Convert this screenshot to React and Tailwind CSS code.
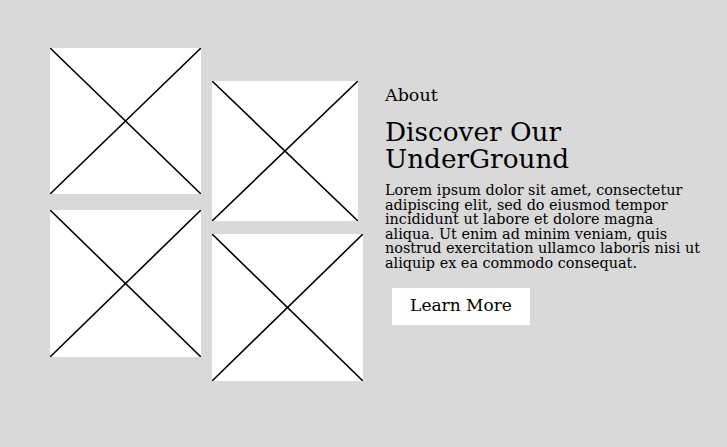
import React from "react";

function Placeholder({ className }) {
  return (
    <div className={"bg-white " + className}>
      <svg className="block w-full h-full" viewBox="0 0 100 100" preserveAspectRatio="none">
        <line x1="0" y1="0" x2="100" y2="100" stroke="#000" strokeWidth="1.6" vectorEffect="non-scaling-stroke" />
        <line x1="100" y1="0" x2="0" y2="100" stroke="#000" strokeWidth="1.6" vectorEffect="non-scaling-stroke" />
      </svg>
    </div>
  );
}

export default function App() {
  return (
    <div
      className="w-[727px] h-[447px] bg-[#d9d9d9] flex text-black overflow-hidden"
      style={{ fontFamily: '"DejaVu Serif", serif' }}
    >
      <div className="flex pl-[50px]">
        <div className="flex flex-col gap-[16px] pt-[48px]">
          <Placeholder className="w-[151px] h-[146px]" />
          <Placeholder className="w-[151px] h-[147px]" />
        </div>
        <div className="flex flex-col gap-[13px] pt-[81px] ml-[11px]">
          <Placeholder className="w-[146px] h-[140px]" />
          <Placeholder className="w-[151px] h-[147px]" />
        </div>
      </div>
      <div className="ml-[22px] pt-[84px] w-[322px] flex flex-col">
        <div className="text-[17.5px] leading-[22px]">About</div>
        <h1 className="mt-[13px] text-[26.3px] leading-[26.5px] font-normal">Discover Our UnderGround</h1>
        <p className="mt-[11px] text-[14.4px] leading-[14.6px]">
          Lorem ipsum dolor sit amet, consectetur adipiscing elit, sed do eiusmod tempor incididunt ut labore et dolore magna aliqua. Ut enim ad minim veniam, quis nostrud exercitation ullamco laboris nisi ut aliquip ex ea commodo consequat.
        </p>
        <button className="mt-[17px] ml-[7px] w-[138px] h-[37px] bg-white text-[17px] flex items-center justify-center">
          Learn More
        </button>
      </div>
    </div>
  );
}
